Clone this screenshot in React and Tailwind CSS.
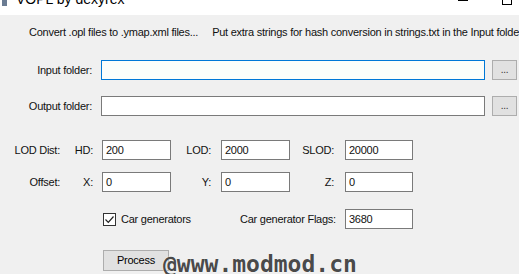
import React from "react";

function Field({ value, className = "" }) {
  return (
    <div
      className={`h-[20px] border border-[#7a7a7a] bg-white pl-[3px] text-[11px] leading-[18px] ${className}`}
    >
      {value}
    </div>
  );
}

export default function App() {
  return (
    <div
      className="relative w-[519px] h-[274px] overflow-hidden bg-[#f0f0f0] text-[11px] tracking-[-0.25px] text-[#111]"
      style={{ fontFamily: '"Liberation Sans", Arial, sans-serif' }}
    >
      {/* Title bar */}
      <div className="relative h-[15px] overflow-hidden bg-white">
        <div className="flex items-start">
          <div className="ml-[2px] h-[6px] w-[5px] bg-[#6b7c93]" />
          <span className="ml-[9px] -mt-[9px] whitespace-nowrap text-[14px] leading-[16px] tracking-normal text-black">
            VOPL by dexyrex
          </span>
        </div>
        <div className="absolute left-[458px] top-0 h-px w-[10px] bg-black" />
        <div className="absolute left-[502px] -top-[5px] h-[10px] w-[10px] border border-black" />
      </div>

      {/* Instructions */}
      <div className="mt-[10px] flex h-[14px] items-center leading-[14px]">
        <span className="ml-[29px] whitespace-nowrap">Convert .opl files to .ymap.xml files...</span>
        <span className="ml-[14px] whitespace-nowrap">
          Put extra strings for hash conversion in strings.txt in the Input folder
        </span>
      </div>

      {/* Input folder */}
      <div className="mt-[21px] flex h-[20px] items-center">
        <div className="w-[92px] text-right">Input folder:</div>
        <div className="ml-[9px] h-[20px] w-[384px] border border-[#0078d7] bg-[#fbfefb]" />
        <button className="ml-[7px] h-[20px] w-[25px] border border-[#adadad] bg-[#e1e1e1] text-[10px] leading-[14px] text-[#333]">
          ...
        </button>
      </div>

      {/* Output folder */}
      <div className="mt-[16px] flex h-[20px] items-center">
        <div className="w-[92px] text-right">Output folder:</div>
        <div className="ml-[9px] h-[20px] w-[384px] border border-[#7a7a7a] bg-white" />
        <button className="ml-[7px] h-[20px] w-[25px] border border-[#adadad] bg-[#e1e1e1] text-[10px] leading-[14px] text-[#333]">
          ...
        </button>
      </div>

      {/* LOD dist */}
      <div className="mt-[24px] flex h-[20px] items-center">
        <div className="w-[60px] text-right">LOD Dist:</div>
        <div className="w-[33px] text-right">HD:</div>
        <Field value="200" className="ml-[9px] w-[69px]" />
        <div className="w-[40px] text-right">LOD:</div>
        <Field value="2000" className="ml-[10px] w-[69px]" />
        <div className="w-[44px] text-right">SLOD:</div>
        <Field value="20000" className="ml-[11px] w-[68px]" />
      </div>

      {/* Offset */}
      <div className="mt-[12px] flex h-[20px] items-center">
        <div className="w-[60px] text-right">Offset:</div>
        <div className="w-[33px] text-right">X:</div>
        <Field value="0" className="ml-[9px] w-[69px]" />
        <div className="w-[40px] text-right">Y:</div>
        <Field value="0" className="ml-[10px] w-[69px]" />
        <div className="w-[44px] text-right">Z:</div>
        <Field value="0" className="ml-[11px] w-[68px]" />
      </div>

      {/* Car generators */}
      <div className="mt-[17px] flex h-[20px] items-center">
        <div className="ml-[103px] flex h-[13px] w-[13px] items-center justify-center border border-[#333] bg-white">
          <svg width="11" height="11" viewBox="0 0 11 11">
            <path d="M1.5 5.5 L4.3 8.3 L9.5 2.5" fill="none" stroke="#222" strokeWidth="1.2" />
          </svg>
        </div>
        <span className="ml-[5px] w-[119px] whitespace-nowrap">Car generators</span>
        <span className="w-[97px] whitespace-nowrap">Car generator Flags:</span>
        <Field value="3680" className="ml-[8px] w-[68px]" />
      </div>

      {/* Process */}
      <div className="mt-[21px] flex">
        <button className="ml-[103px] h-[21px] w-[66px] border border-[#adadad] bg-[#e1e1e1] text-[11px] leading-[19px] text-black">
          Process
        </button>
      </div>

      {/* watermark */}
      <div
        className="absolute left-[163px] top-[251px] whitespace-nowrap text-[23px] font-bold leading-[26px] tracking-normal text-[#4a4a4a] [text-shadow:0_0_1px_#fff,0_0_1px_#fff]"
        style={{ fontFamily: '"DejaVu Sans Mono", monospace' }}
      >
        @www.modmod.cn
      </div>
    </div>
  );
}
